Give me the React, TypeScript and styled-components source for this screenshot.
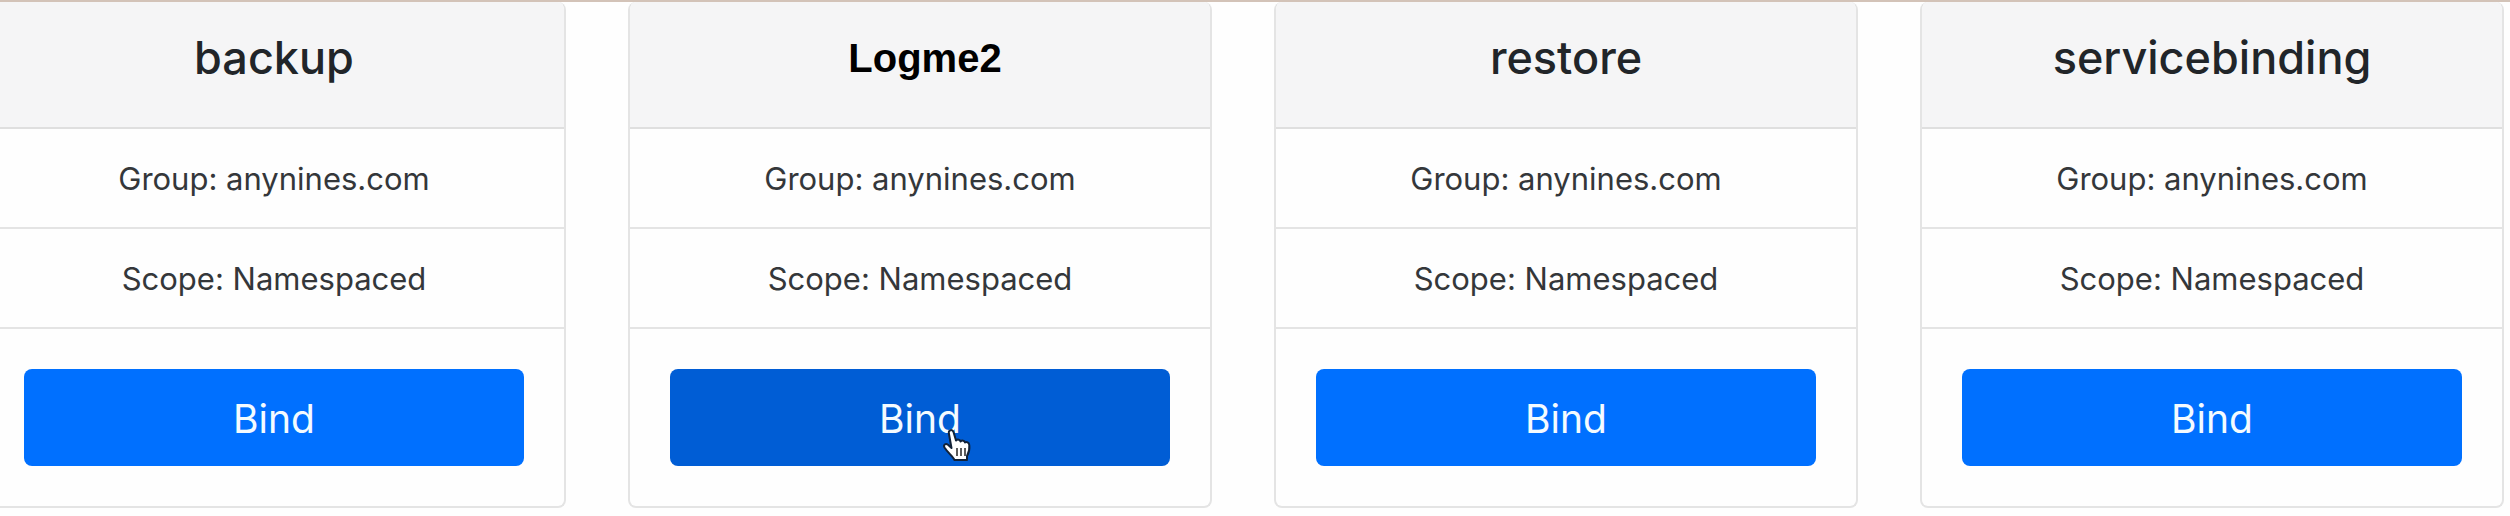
import React from "react";
import styled, { createGlobalStyle } from "styled-components";

const Global = createGlobalStyle`
  *, *::before, *::after { box-sizing: border-box; }
  body {
    margin: 0;
    background: #fefefe;
    color: #212529;
    font-family: Inter, "Liberation Sans", sans-serif;
    overflow-x: hidden;
  }
`;

const Page = styled.main`
  border-top: 2px solid #d3c3b8;
  overflow: hidden;
`;

const Deck = styled.div`
  display: grid;
  grid-template-columns: repeat(4, minmax(0, 1fr));
  gap: 62px;
  margin: 0 6px 0 -18px;
`;

const Card = styled.section`
  display: flex;
  flex-direction: column;
  border: 2px solid #e4e4e4;
  border-top: 0;
  border-radius: 8px;
  overflow: hidden;
  text-align: center;
  background: #fefefe;
`;

const CardHeader = styled.header`
  padding: 24px 40px 37px;
  background: #f5f5f6;
  border-bottom: 2px solid #dfdfdf;
`;

const Title = styled.h4<{ $custom?: boolean }>`
  margin: 0;
  font-family: ${(p) => (p.$custom ? '"Liberation Sans", Arial, sans-serif' : "inherit")};
  font-size: ${(p) => (p.$custom ? "40px" : "45px")};
  font-weight: ${(p) => (p.$custom ? 700 : 500)};
  line-height: 64px;
  color: ${(p) => (p.$custom ? "#000" : "inherit")};
  padding-left: ${(p) => (p.$custom ? "10px" : "0")};
`;

const Facts = styled.ul`
  list-style: none;
  margin: 0;
  padding: 0;
`;

const Fact = styled.li`
  padding: 26px 40px 24px;
  font-size: 31px;
  line-height: 48px;
  border-bottom: 2px solid #e4e4e4;
  color: #34373a;
`;

const CardBody = styled.div`
  padding: 40px;
`;

const BindButton = styled.button<{ $hovered?: boolean }>`
  position: relative;
  display: block;
  width: 100%;
  padding: 20px 32px 17px;
  border: 0;
  border-radius: 8px;
  background: ${(p) => (p.$hovered ? "#005dd5" : "#0070ff")};
  color: #f4fbff;
  font: inherit;
  font-size: 39px;
  line-height: 60px;
  cursor: pointer;
`;

const Pointer = styled.svg`
  position: absolute;
  left: calc(50% + 20px);
  top: 58px;
  width: 34px;
  height: 38px;
`;

const HandCursor = () => (
  <Pointer viewBox="0 0 34 38" aria-hidden="true">
    <path
      d="M10 3.5C11.5 2.5 13 3.5 13.5 5L16 13.5C17.500 12 20 12.500 20.500 14.500C22 13 24.500 13.500 25 15.500C26.500 14.500 29 15.500 29.300 18C29.800 22 29 25.500 27 29V33H14.500C13 29.500 8 26 4.500 20.500C3 18 5.500 16 8 17.800L11.500 21L8.800 6C8.600 5 9 4 10 3.500Z"
      fill="#fff"
      stroke="#122238"
      strokeWidth="2"
      strokeLinejoin="round"
    />
    <path d="M17 21V29M21 21V29M25 21V29" stroke="#333" strokeWidth="1.600" />
  </Pointer>
);

type Resource = { name: string; custom?: boolean; hovered?: boolean };

const resources: Resource[] = [
  { name: "backup" },
  { name: "Logme2", custom: true, hovered: true },
  { name: "restore" },
  { name: "servicebinding" },
];

export default function App() {
  return (
    <>
      <Global />
      <Page>
        <Deck>
          {resources.map((r) => (
            <Card key={r.name}>
              <CardHeader>
                <Title $custom={r.custom}>{r.name}</Title>
              </CardHeader>
              <Facts>
                <Fact>Group: anynines.com</Fact>
                <Fact>Scope: Namespaced</Fact>
              </Facts>
              <CardBody>
                <BindButton type="button" $hovered={r.hovered}>
                  Bind
                  {r.hovered && <HandCursor />}
                </BindButton>
              </CardBody>
            </Card>
          ))}
        </Deck>
      </Page>
    </>
  );
}
